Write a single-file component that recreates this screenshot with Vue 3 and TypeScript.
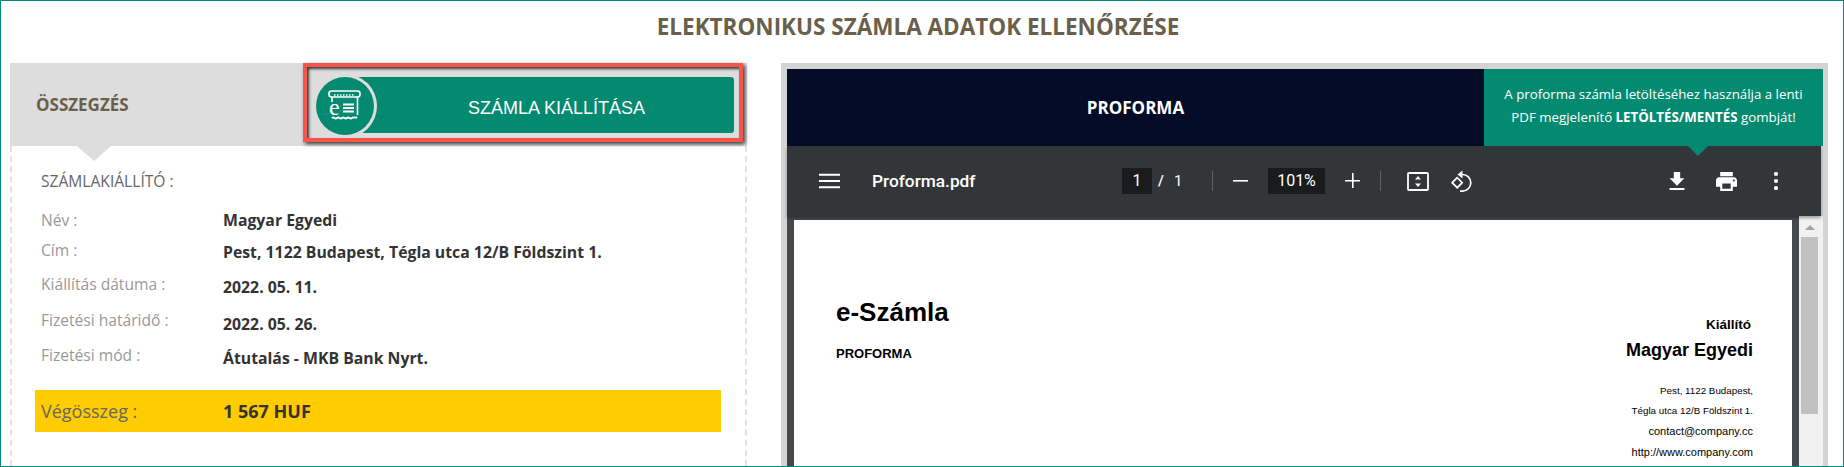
<template>
  <div class="page">
    <h1 class="title">ELEKTRONIKUS SZÁMLA ADATOK ELLENŐRZÉSE</h1>
    <div class="columns">
      <section class="summary">
        <header class="summary-head">
          <h2 class="summary-title">ÖSSZEGZÉS</h2>
          <div class="cta-frame">
            <button type="button" class="cta">SZÁMLA KIÁLLÍTÁSA</button>
            <span class="cta-icon">
              <svg width="34" height="34" viewBox="0 0 34 34" fill="none" stroke="#fff">
                <rect x="1" y="2" width="31" height="6" rx="2.500" stroke-width="1.600" />
                <path d="M4 8v5M29.500 8v18" stroke-width="1.600" />
                <path d="M6 6h21" stroke-width="1.500" stroke-dasharray="1.500 1.500" />
                <path d="M4 29c2-2 3 2 5 0s3 2 5 0 3 2 5 0 3 2 5 0 3 1 5-1" stroke-width="1.800" />
                <path d="M15 15.500h11M15 19h11M15 22.500h11" stroke-width="1.800" />
                <text x="1" y="26" class="cta-e">e</text>
              </svg>
            </span>
          </div>
        </header>
        <div class="summary-body">
          <div class="issuer">SZÁMLAKIÁLLÍTÓ :</div>
          <div v-for="row in rows" :key="row.label" class="row" :style="{ height: row.height + 'px' }">
            <span class="row-label">{{ row.label }}</span>
            <span class="row-value" :style="{ paddingTop: row.shift + 'px' }">{{ row.value }}</span>
          </div>
          <div class="total">
            <span class="total-label">Végösszeg :</span>
            <span class="total-value">1 567 HUF</span>
          </div>
        </div>
      </section>

      <section class="preview">
        <div class="preview-head">
          <div class="preview-name">PROFORMA</div>
          <div class="preview-hint">
            A proforma számla letöltéséhez használja a lenti<br />
            PDF megjelenítő <b>LETÖLTÉS/MENTÉS</b> gombját!
          </div>
        </div>
        <div class="toolbar">
          <svg class="tool-menu" width="23" height="24" viewBox="0 0 24 24" fill="#fff">
            <path d="M1 19.500h22v-2H1v2zm0-6.500h22v-2H1v2zm0-8.500v2h22v-2H1z" />
          </svg>
          <span class="file-name">Proforma.pdf</span>
          <span class="page-box">1</span>
          <span class="page-sep">/</span>
          <span class="page-total">1</span>
          <span class="divider first"></span>
          <svg class="tool-minus" width="16" height="16" viewBox="0 0 16 16" fill="#fff"><path d="M0 7h15v1.600H0z" /></svg>
          <span class="zoom-box">101%</span>
          <svg class="tool-plus" width="16" height="16" viewBox="0 0 16 16" fill="#fff"><path d="M7 0h1.600v7H15v1.600H8.600V15H7V8.600H0V7h7z" /></svg>
          <span class="divider second"></span>
          <svg class="tool-fit" width="22" height="19" viewBox="0 0 22 19" fill="none">
            <rect x="1" y="1" width="20" height="17" rx="1" stroke="#fff" stroke-width="1.800" />
            <path d="M11 4l3 3.500H8zM11 15l-3-3.500h6z" fill="#fff" />
          </svg>
          <svg class="tool-rotate" width="22" height="22" viewBox="0 0 22 22" fill="none" stroke="#fff" stroke-width="1.700">
            <path d="M1.200 12.700l5-5 5 5-5 5z" />
            <path d="M10 4.500h1.500a8.300 8.300 0 0 1 0 16.600H9" />
            <path d="M11.500 .5l-5 4 5 4z" fill="#fff" stroke="none" />
          </svg>
          <svg class="tool-download" width="16" height="18" viewBox="5 3 14 17" fill="#fff">
            <path d="M19 9h-4V3H9v6H5l7 7 7-7zM5 18v2h14v-2H5z" />
          </svg>
          <svg class="tool-print" width="21" height="19" viewBox="2 3 20 18" fill="#fff">
            <path d="M19 8H5c-1.660 0-3 1.340-3 3v6h4v4h12v-4h4v-6c0-1.660-1.340-3-3-3zm-3 11H8v-5h8v5zm3-7c-.55 0-1-.45-1-1s.45-1 1-1 1 .45 1 1-.45 1-1 1zm-1-9H6v4h12V3z" />
          </svg>
          <svg class="tool-more" width="6" height="18" viewBox="0 0 6 18" fill="#fff">
            <circle cx="3" cy="2" r="2.100" /><circle cx="3" cy="9" r="2.100" /><circle cx="3" cy="16" r="2.100" />
          </svg>
        </div>
        <div class="viewer">
          <div class="sheet">
            <div class="sheet-left">
              <div class="doc-title">e-Számla</div>
              <div class="doc-type">PROFORMA</div>
            </div>
            <div class="sheet-right">
              <div class="doc-issuer">Kiállító</div>
              <div class="doc-name">Magyar Egyedi</div>
              <div class="doc-small first">Pest, 1122 Budapest,</div>
              <div class="doc-small">Tégla utca 12/B Földszint 1.</div>
              <div class="doc-link">contact@company.cc</div>
              <div class="doc-link">http://www.company.com</div>
            </div>
          </div>
          <div class="scrollbar">
            <span class="scroll-up"></span>
            <span class="scroll-thumb"></span>
          </div>
        </div>
      </section>
    </div>
  </div>
</template>

<script setup lang="ts">
interface Row {
  label: string
  value: string
  height: number
  shift: number
}

const rows: Row[] = [
  { label: 'Név :', value: 'Magyar Egyedi', height: 30, shift: 0 },
  { label: 'Cím :', value: 'Pest, 1122 Budapest, Tégla utca 12/B Földszint 1.', height: 34, shift: 2 },
  { label: 'Kiállítás dátuma :', value: '2022. 05. 11.', height: 36, shift: 3 },
  { label: 'Fizetési határidő :', value: '2022. 05. 26.', height: 35, shift: 4 },
  { label: 'Fizetési mód :', value: 'Átutalás - MKB Bank Nyrt.', height: 35, shift: 3 }
]
</script>

<style>
html,
body {
  margin: 0;
  background: #fff;
  overflow: hidden;
}
</style>

<style scoped>
.page {
  box-sizing: border-box;
  width: 1844px;
  height: 467px;
  border: 1px solid #00897b;
  overflow: hidden;
  font-family: 'Open Sans', sans-serif;
  display: flex;
  flex-direction: column;
}

.title {
  margin: 0;
  height: 62px;
  padding: 12px 8px 0 0;
  box-sizing: border-box;
  text-align: center;
  font-size: 22.500px;
  line-height: 28px;
  font-weight: 700;
  color: #6a5f4b;
}

.columns {
  display: flex;
  padding-left: 9px;
  gap: 34px;
  flex: 1;
  min-height: 0;
}

.summary {
  width: 737px;
  display: flex;
  flex-direction: column;
}

.summary-head {
  height: 83px;
  background: #ddd;
  display: flex;
  justify-content: space-between;
  flex: none;
  position: relative;
  padding-right: 4px;
  box-sizing: border-box;
}

.summary-head::after {
  content: '';
  position: absolute;
  left: 67px;
  top: 83px;
  border-left: 17px solid transparent;
  border-right: 17px solid transparent;
  border-top: 15px solid #ddd;
}

.summary-title {
  margin: 0;
  padding: 32px 0 0 26px;
  font-size: 17px;
  line-height: 20px;
  font-weight: 700;
  color: #6a5f4b;
}

.cta-frame {
  position: relative;
  box-sizing: border-box;
  width: 440px;
  height: 79px;
  border: 4px solid #f5554a;
  box-shadow: 2px 2px 4px rgba(0, 0, 0, 0.75), inset 2px 2px 3px rgba(0, 0, 0, 0.75);
  padding: 10px 5px 4px 50px;
}

.cta {
  display: block;
  width: 100%;
  height: 56px;
  border: 0;
  border-radius: 3px;
  background: #058a72;
  color: #fff;
  padding: 7px 0 0 22px;
  font-family: 'Liberation Sans', Arial, sans-serif;
  font-size: 18px;
}

.cta-icon {
  position: absolute;
  left: 9px;
  top: 10px;
  width: 58px;
  height: 58px;
  border-radius: 50%;
  background: #058a72;
  box-shadow: 0 0 0 3px #ddd;
  display: flex;
  align-items: center;
  justify-content: center;
}

.cta-e {
  font-family: 'Liberation Serif', serif;
  font-size: 24px;
  fill: #fff;
  stroke: none;
}

.summary-body {
  flex: 1;
  border-left: 2px dashed #e2e2e2;
  border-right: 2px dashed #e2e2e2;
  padding: 25px 24px 0 23px;
}

.issuer {
  margin-left: 6px;
  height: 39px;
  font-size: 15.600px;
  line-height: 20px;
  color: #666;
}

.row {
  display: grid;
  grid-template-columns: 182px 1fr;
  margin-left: 6px;
  font-size: 15.600px;
  line-height: 20px;
}

.row-label {
  color: #999;
}

.row-value {
  font-weight: 700;
  font-size: 15.800px;
  color: #333;
}

.total {
  margin-top: 10px;
  height: 42px;
  background: #fc0;
  display: grid;
  grid-template-columns: 182px 1fr;
  align-items: center;
  padding-left: 6px;
  font-size: 18px;
}

.total-label {
  color: #666;
}

.total-value {
  font-weight: 700;
  color: #333;
}

.preview {
  width: 1047px;
  box-sizing: border-box;
  background: #d4d4d4;
  padding: 6px 5px 0 6px;
  display: flex;
  flex-direction: column;
}

.preview-head {
  height: 77px;
  display: flex;
  flex: none;
}

.preview-name {
  width: 697px;
  background: #040c28;
  color: #fff;
  font-size: 17px;
  font-weight: 700;
  text-align: center;
  line-height: 77px;
}

.preview-hint {
  flex: 1;
  position: relative;
  background: #058a72;
  color: #fff;
  font-size: 13.300px;
  line-height: 23px;
  text-align: center;
  padding-top: 14px;
  box-sizing: border-box;
}

.preview-hint::after {
  content: '';
  position: absolute;
  left: 204px;
  top: 77px;
  border-left: 10px solid transparent;
  border-right: 10px solid transparent;
  border-top: 10px solid #058a72;
  z-index: 2;
}

.toolbar {
  height: 70px;
  flex: none;
  margin-right: 2px;
  background: #323639;
  display: flex;
  align-items: center;
  color: #fff;
  font-family: Roboto, sans-serif;
  position: relative;
  z-index: 1;
  box-shadow: 0 2px 3px rgba(0, 0, 0, 0.35);
}

.tool-menu {
  margin-left: 31px;
}

.file-name {
  margin-left: 31px;
  width: 250px;
  font-size: 17.300px;
  font-weight: 500;
}

.page-box,
.zoom-box {
  height: 26px;
  background: #191b1c;
  text-align: center;
  font-size: 16px;
  line-height: 26px;
}

.page-box {
  width: 30px;
}

.page-sep {
  margin-left: 6px;
  width: 6px;
  font-size: 15px;
  font-weight: 500;
}

.page-total {
  margin-left: 10px;
  width: 9px;
  font-size: 15px;
}

.divider {
  width: 1px;
  height: 20px;
  background: #5f6368;
}

.divider.first {
  margin-left: 29px;
}

.tool-minus {
  margin-left: 20px;
}

.zoom-box {
  margin-left: 19px;
  width: 57px;
}

.tool-plus {
  margin-left: 20px;
}

.divider.second {
  margin-left: 19px;
}

.tool-fit {
  margin-left: 26px;
}

.tool-rotate {
  margin-left: 22px;
}

.tool-download {
  margin-left: 196px;
}

.tool-print {
  margin-left: 31px;
}

.tool-more {
  margin-left: 36px;
}

.viewer {
  flex: 1;
  min-height: 0;
  display: flex;
  background: #45494c;
  padding-left: 7px;
}

.sheet {
  width: 998px;
  margin: 4px 7px 0 0;
  background: #fff;
  display: flex;
  justify-content: space-between;
  padding: 0 39px 0 42px;
  box-sizing: border-box;
}

.doc-title {
  margin-top: 76px;
  font-family: 'Liberation Sans', Arial, sans-serif;
  font-size: 26px;
  line-height: 32px;
  font-weight: 700;
  color: #000;
}

.doc-type {
  margin-top: 18px;
  font-family: 'Liberation Sans', Arial, sans-serif;
  font-size: 13px;
  line-height: 16px;
  font-weight: 700;
  color: #000;
}

.sheet-right {
  text-align: right;
  font-family: 'Liberation Sans', Arial, sans-serif;
  color: #000;
  padding-top: 96px;
}

.doc-issuer {
  font-size: 13.500px;
  line-height: 18px;
  font-weight: 700;
  padding-right: 2px;
}

.doc-name {
  margin-top: 4px;
  font-size: 18px;
  line-height: 24px;
  font-weight: 700;
}

.doc-small {
  font-size: 9.800px;
  line-height: 20px;
}

.doc-small.first {
  margin-top: 19px;
}

.doc-link {
  font-size: 11px;
  line-height: 21px;
}

.scrollbar {
  width: 24px;
  background: #f1f1f1;
  position: relative;
  flex: none;
}

.scroll-up {
  position: absolute;
  left: 6px;
  top: 9px;
  border-left: 5px solid transparent;
  border-right: 5px solid transparent;
  border-bottom: 5px solid #a3a3a3;
}

.scroll-thumb {
  position: absolute;
  left: 2px;
  top: 21px;
  width: 17px;
  height: 177px;
  background: #c1c1c1;
}
</style>
